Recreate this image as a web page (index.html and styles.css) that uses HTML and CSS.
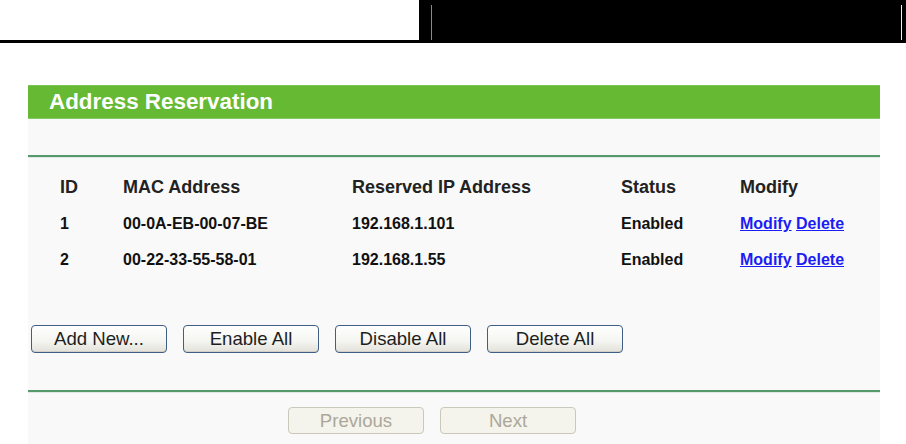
FILE: index.html
```html
<!DOCTYPE html>
<html>
<head>
<meta charset="utf-8">
<title>Address Reservation</title>
<link rel="stylesheet" href="styles.css">
</head>
<body>
<div class="topbar">
  <div class="top-left"></div>
  <div class="top-right"><div class="top-inner"></div></div>
</div>
<div class="panel">
  <div class="title">Address Reservation</div>
  <div class="gap-top"></div>
  <div class="sep"></div>
  <div class="table">
    <div class="row head">
      <span>ID</span><span>MAC Address</span><span>Reserved IP Address</span><span>Status</span><span>Modify</span>
    </div>
    <div class="row">
      <span>1</span><span>00-0A-EB-00-07-BE</span><span>192.168.1.101</span><span>Enabled</span><span><a href="#">Modify</a> <a href="#">Delete</a></span>
    </div>
    <div class="row">
      <span>2</span><span>00-22-33-55-58-01</span><span>192.168.1.55</span><span>Enabled</span><span><a href="#">Modify</a> <a href="#">Delete</a></span>
    </div>
  </div>
  <div class="actions">
    <button class="btn">Add New...</button>
    <button class="btn">Enable All</button>
    <button class="btn">Disable All</button>
    <button class="btn">Delete All</button>
  </div>
  <div class="sep"></div>
  <div class="pager">
    <button class="btn disabled" disabled>Previous</button>
    <button class="btn disabled" disabled>Next</button>
  </div>
</div>
</body>
</html>
```

FILE: styles.css
```css
html, body {
  margin: 0;
  padding: 0;
  background: #fff;
  font-family: "Liberation Sans", Arial, sans-serif;
}

.topbar {
  display: flex;
  height: 40px;
  border-bottom: 3px solid #000;
}
.top-left {
  width: 419px;
  background: #fff;
}
.top-right {
  flex: 1;
  background: #000;
  display: flex;
  padding: 5px 4px 0 12px;
}
.top-inner {
  flex: 1;
  border-left: 1px solid #8a8a8a;
  border-right: 1px solid #f0f0f0;
}

.panel {
  margin: 42px 0 0 28px;
  width: 852px;
  background: #f9f9f9;
  padding-bottom: 20px;
}

.title {
  height: 32px;
  line-height: 32px;
  background: #66b933;
  border-top: 1px solid #7cc554;
  border-bottom: 1px solid #86c862;
  color: #fff;
  font-weight: bold;
  font-size: 22.4px;
  padding-left: 21px;
}

.gap-top {
  height: 36px;
}

.sep {
  height: 2px;
  background: #569a6b;
  border-bottom: 1px solid #dfe9e2;
}

.table {
  padding: 11px 0 0 32px;
}
.row {
  display: grid;
  grid-template-columns: 63px 229px 269px 119px auto;
  height: 36px;
  line-height: 36px;
  font-size: 16px;
  font-weight: bold;
  color: #111;
}
.row.head {
  height: 37px;
  line-height: 37px;
  font-size: 18px;
  font-weight: bold;
  color: #222;
}
.row a {
  color: #1c1cf5;
  text-decoration: underline;
}

.actions {
  display: flex;
  gap: 16px;
  padding: 47px 0 37px 3px;
}

.btn {
  box-sizing: border-box;
  width: 136px;
  height: 28px;
  padding: 0;
  font-family: "Liberation Sans", Arial, sans-serif;
  font-size: 18.6px;
  color: #1e1e1e;
  border: 1px solid #3f5f85;
  border-radius: 4px;
  background: linear-gradient(#ffffff, #f4f4f0 60%, #e2e1da);
  box-shadow: inset 0 -1px 0 #d2d0c6;
}

.pager {
  display: flex;
  gap: 16px;
  padding: 14px 0 0 260px;
}
.btn.disabled {
  height: 27px;
  color: #aca899;
  border: 1px solid #cac8bb;
  background: #f4f3ec;
  box-shadow: none;
}
```
